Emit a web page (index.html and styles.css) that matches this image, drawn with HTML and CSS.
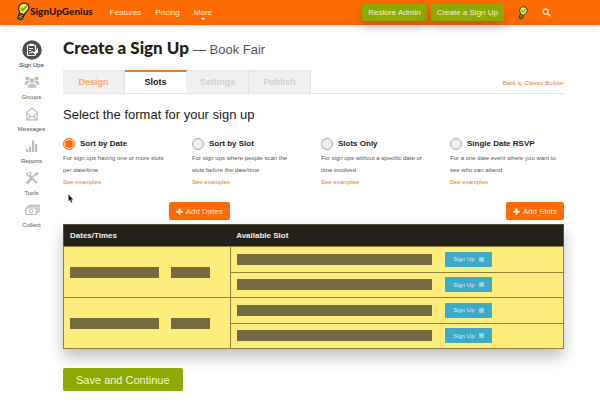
FILE: index.html
```html
<!DOCTYPE html>
<html lang="en">
<head>
<meta charset="utf-8">
<title>Create a Sign Up</title>
<link rel="stylesheet" href="styles.css">
</head>
<body>
<svg class="defs" aria-hidden="true">
  <symbol id="bulb" viewBox="0 0 16 20">
    <path d="M9.500 1c3.500 0 5.700 2.400 5.300 5.500-.3 2.200-1.900 3.300-3.300 4.600-.8.800-1.300 1.700-1.900 2.600L5 12c.2-1.400-.2-2.300-.7-3.500C3 5 5.300 1 9.500 1z" fill="#f1ea55" stroke="#30300c" stroke-width="1.400"/>
    <path d="M6.500 6l1.700 2.800L12.500 4" fill="none" stroke="#78a81c" stroke-width="1.700"/>
    <path d="M4.400 12l5.200 1.900-1 3.200-2.700 1.700-3-1.500z" fill="#c9bd86" stroke="#30300c" stroke-width="1.400"/>
    <path d="M4 14l4.800 1.700M3.500 16l4.200 1.500" stroke="#30300c" stroke-width="1.100"/>
  </symbol>
  <symbol id="plus" viewBox="0 0 8 8"><path d="M4 .5v7M.5 4h7" stroke="currentColor" stroke-width="2"/></symbol>
  <symbol id="grid" viewBox="0 0 6 6"><path d="M1 .5v5M3 .5v5M5 .5v5M.5 1h5M.5 3h5M.5 5h5" stroke="currentColor" stroke-width=".8"/></symbol>
</svg>

<header class="topbar">
  <a class="logo" href="#"><svg class="logo-bulb"><use href="#bulb"/></svg><span>SignUpGenius</span></a>
  <nav class="nav" aria-label="Main">
    <a href="#">Features</a>
    <a href="#">Pricing</a>
    <a href="#" class="more">More</a>
  </nav>
  <div class="actions">
    <button class="btn btn-green" type="button">Restore Admin</button>
    <button class="btn btn-green" type="button">Create a Sign Up</button>
  </div>
  <a class="tip" href="#" aria-label="Ideas"><svg class="tip-bulb"><use href="#bulb"/></svg></a>
  <button class="search" type="button" aria-label="Search">
    <svg viewBox="0 0 9 9"><circle cx="3.600" cy="3.600" r="2.600" fill="none" stroke="#ffe9d6" stroke-width="1.300"/><path d="M5.500 5.500l2.800 2.800" stroke="#ffe9d6" stroke-width="1.600"/></svg>
  </button>
</header>

<div class="page">
  <nav class="side" aria-label="Sections">
    <a href="#" class="current">
      <svg viewBox="0 0 20 20"><circle cx="10" cy="10" r="9.700" fill="#4d4d4f"/><rect x="5.500" y="5" width="8" height="10.500" rx="1" fill="none" stroke="#fff" stroke-width="1.200"/><rect x="7.300" y="3.700" width="4.400" height="2.400" rx=".6" fill="#fff"/><path d="M7 8.500h4M7 10.500h2M7 12.800h3" stroke="#fff"/><path d="M9.500 10.200l1.800 1.700 4.700-4.200v5l-3 1.600-3.500-2.200z" fill="#fff"/><path d="M10.500 10.500l1.500 1.400 2.800-2.700" fill="none" stroke="#4d4d4f" stroke-width=".7"/></svg>
      <span>Sign Ups</span></a>
    <a href="#">
      <svg viewBox="0 0 20 20" fill="#bdbdbd"><circle cx="5.500" cy="6.500" r="2.100"/><circle cx="14.500" cy="6.500" r="2.100"/><path d="M2.700 12.500c0-2.500 1-3.700 2.800-3.700 1 0 1.600.3 2 .9-1 .8-1.700 1.800-1.900 2.800zM17.300 12.500c0-2.500-1-3.700-2.800-3.700-1 0-1.600.3-2 .9 1 .8 1.700 1.800 1.900 2.800z"/><circle cx="10" cy="8.600" r="2.300"/><path d="M5.900 15.700c0-3 1.300-4.300 4.100-4.300s4.100 1.300 4.100 4.300z"/></svg>
      <span>Groups</span></a>
    <a href="#">
      <svg viewBox="0 0 20 20" fill="none" stroke="#bdbdbd" stroke-width="1.200"><path d="M10 4l5.200 4.400v7.400H4.800V8.400z"/><path d="M4.800 15.800l3.700-3.300h3l3.700 3.300M5 9l3.500 3.500M15 9l-3.500 3.500"/></svg>
      <span>Messages</span></a>
    <a href="#">
      <svg viewBox="0 0 20 20" fill="#bdbdbd"><path d="M4 13h2.200v3H4zM7 10.500h2.200V16H7zM10 4.500h2.200V16H10zM13 8h2.200v8H13z"/></svg>
      <span>Reports</span></a>
    <a href="#">
      <svg viewBox="0 0 20 20" fill="none" stroke="#bdbdbd"><path d="M7.500 7.500l7.500 7.500" stroke-width="2.200"/><path d="M5 4.200v2.300l1.500 1.300 2-.6.300-2-1.300-1.500" stroke-width="1.500"/><path d="M15.800 4.200L9.500 10" stroke-width="1.400"/><path d="M9.500 10.500l-4.800 5" stroke-width="2.700"/><path d="M13 6.500l1.500.2 1.800-2" stroke-width="1.300"/></svg>
      <span>Tools</span></a>
    <a href="#">
      <svg viewBox="0 0 20 20" fill="none" stroke="#bdbdbd" stroke-width="1.100"><path d="M4 8h10v6.500H4zM5.500 8V6.400h10.200v6.300H14M7.500 6.400V5h9.700v6.200h-1.500"/><circle cx="9" cy="11.200" r="1.700"/></svg>
      <span>Collect</span></a>
  </nav>

  <main class="content">
    <h1>Create a Sign Up <span>— Book Fair</span></h1>
    <div class="tabs">
      <a class="tab done" href="#">Design</a>
      <a class="tab active" href="#">Slots</a>
      <a class="tab" href="#">Settings</a>
      <a class="tab" href="#">Publish</a>
      <a class="classic" href="#">Back to Classic Builder</a>
    </div>

    <h2>Select the format for your sign up</h2>
    <div class="formats">
      <div class="format">
        <label><input type="radio" name="format" checked>Sort by Date</label>
        <p>For sign ups having one or more slots per date/time</p>
        <a href="#">See examples</a>
      </div>
      <div class="format">
        <label><input type="radio" name="format">Sort by Slot</label>
        <p>For sign ups where people scan the slots before the date/time</p>
        <a href="#">See examples</a>
      </div>
      <div class="format">
        <label><input type="radio" name="format">Slots Only</label>
        <p>For sign ups without a specific date or time involved</p>
        <a href="#">See examples</a>
      </div>
      <div class="format">
        <label><input type="radio" name="format">Single Date RSVP</label>
        <p>For a one date event where you want to see who can attend</p>
        <a href="#">See examples</a>
      </div>
    </div>

    <div class="adders">
      <div class="add-dates"><button class="btn btn-orange" type="button"><svg><use href="#plus"/></svg>Add Dates</button></div>
      <button class="btn btn-orange" type="button"><svg><use href="#plus"/></svg>Add Slots</button>
    </div>

    <table class="slots">
      <thead><tr><th class="col-date">Dates/Times</th><th>Available Slot</th></tr></thead>
      <tbody>
        <tr>
          <td rowspan="2"><div class="line"><i class="bar bar-date"></i><i class="bar bar-time"></i></div></td>
          <td><div class="line"><i class="bar bar-slot"></i><button class="signup" type="button">Sign Up<svg><use href="#grid"/></svg></button></div></td>
        </tr>
        <tr><td><div class="line"><i class="bar bar-slot"></i><button class="signup" type="button">Sign Up<svg><use href="#grid"/></svg></button></div></td></tr>
        <tr>
          <td rowspan="2"><div class="line"><i class="bar bar-date"></i><i class="bar bar-time"></i></div></td>
          <td><div class="line"><i class="bar bar-slot"></i><button class="signup" type="button">Sign Up<svg><use href="#grid"/></svg></button></div></td>
        </tr>
        <tr><td><div class="line"><i class="bar bar-slot"></i><button class="signup" type="button">Sign Up<svg><use href="#grid"/></svg></button></div></td></tr>
      </tbody>
    </table>

    <button class="btn save" type="button">Save and Continue</button>
    <svg class="cursor" viewBox="0 0 6 9" aria-hidden="true"><path d="M.5.500v6.600L2 5.800l1.100 2.700 1.200-.5-1.100-2.600h2z" fill="#111" stroke="#999" stroke-width=".4"/></svg>
  </main>
</div>
</body>
</html>
```
FILE: styles.css
```css
* { box-sizing: border-box; }

body {
  margin: 0;
  background: #fff;
  color: #222;
  font-family: "Liberation Sans", Arial, sans-serif;
  font-size: 8px;
}

a { color: inherit; text-decoration: none; }
button { border: 0; padding: 0; font: inherit; cursor: pointer; }
.defs { position: absolute; width: 0; height: 0; }

.topbar {
  display: flex;
  align-items: center;
  height: 25px;
  padding: 0 49px 0 15px;
  background: #fd6b02;
  color: #ffe9d6;
  box-shadow: 0 1px 5px rgba(0, 0, 0, .18);
}
.logo {
  display: flex;
  align-items: center;
  padding-bottom: 3px;
  color: #2b1a08;
  font: 900 10px/12px Lato, sans-serif;
}
.logo-bulb { width: 15px; height: 19px; }
.nav { display: flex; gap: 14px; margin-left: 17px; }
.more { position: relative; }
.more::after {
  content: "";
  position: absolute;
  top: 10px;
  left: 7px;
  border: 2px solid transparent;
  border-top-color: #fff;
}
.actions { display: flex; gap: 4px; margin-left: auto; }

.btn { border-radius: 2px; color: #fff; }
.btn-green {
  height: 17px;
  padding: 0 6px;
  background: #8caa00;
  color: #f2f6da;
  box-shadow: 0 6px 12px rgba(0, 0, 0, .2);
}
.tip { margin-left: 13px; }
.tip-bulb { display: block; width: 11px; height: 14px; }
.search { display: flex; margin-left: 14px; background: none; }
.search svg { width: 9px; height: 9px; }

.page { display: flex; }
.side {
  display: flex;
  flex-direction: column;
  flex: 0 0 63px;
  gap: 3px;
  padding-top: 15px;
}
.side a {
  display: flex;
  flex-direction: column;
  align-items: center;
  gap: 1px;
  color: #555;
  font-size: 6px;
  line-height: 8px;
}
.side .current { color: #222; }
.side svg { width: 20px; height: 20px; }

.content { position: relative; flex: 1; padding: 11px 36px 14px 0; }

h1 {
  margin: 0;
  color: #222218;
  font: 900 17px/24px Lato, sans-serif;
}
h1 span {
  color: #555;
  font: 13px "Liberation Sans", Arial, sans-serif;
}

.tabs {
  display: flex;
  margin-top: 10px;
  border-bottom: 1px solid #e6e6e6;
}
.tab {
  width: 62px;
  height: 23px;
  border-right: 1px solid #e2e2e2;
  border-top: 1px solid #e6e6e6;
  background: #f0f0f0;
  color: #d0d0d0;
  font-size: 9px;
  font-weight: bold;
  line-height: 22px;
  text-align: center;
}
.tab.done { color: #fdaa62; }
.tab.active {
  margin-bottom: -1px;
  border-top: 2px solid #ee7a1f;
  border-right-color: #f0f0f0;
  background: #fff;
  color: #222;
  line-height: 20px;
}
.classic {
  margin: 9px 0 0 auto;
  color: #ee7a1f;
  font-size: 6px;
  line-height: 8px;
}

h2 {
  margin: 13px 0 0;
  font-size: 13px;
  font-weight: normal;
  line-height: 16px;
}

.formats {
  display: grid;
  grid-template-columns: repeat(4, 1fr);
  gap: 15px;
  margin-top: 14px;
}
.format { color: #555; font-size: 6px; line-height: 12px; }
.format label {
  display: flex;
  align-items: center;
  gap: 5px;
  height: 14px;
  color: #222;
  font-size: 8px;
  font-weight: bold;
}
.format input {
  appearance: none;
  width: 12px;
  height: 12px;
  margin: 0;
  border: 1px solid #aaa;
  border-radius: 50%;
  background: #eee;
}
.format input:checked {
  border-color: #fd6b02;
  background: #fd6b02;
  box-shadow: inset 0 0 0 1px #fff;
}
.format p { margin: 1px 0 0; padding-right: 5px; }
.format a { display: block; color: #f07818; }

.adders {
  display: flex;
  justify-content: space-between;
  margin-top: 14px;
}
.add-dates { width: 33.333%; text-align: right; }
.btn-orange {
  display: inline-flex;
  align-items: center;
  gap: 3px;
  height: 18px;
  padding: 0 7px;
  background: #fd6b02;
  color: #ffe9d6;
}
.btn-orange svg { width: 7px; height: 7px; color: #fff; }

.slots {
  width: 100%;
  height: 125px;
  margin-top: 4px;
  border: 1px solid #555038;
  border-collapse: collapse;
  table-layout: fixed;
  background: #feec7c;
  box-shadow: 0 8px 14px rgba(0, 0, 0, .25);
}
.slots th {
  height: 22px;
  padding: 0 6px;
  background: #232119;
  color: #eee;
  text-align: left;
}
.col-date { width: 33.333%; }
.slots td {
  height: 25px;
  padding: 0 6px;
  border: 1px solid #95803c;
}
.line { display: flex; align-items: center; }
.bar { height: 11px; background: #756b42; }
.bar-date { width: 58%; }
.bar-time { width: 25%; margin-left: 8%; }
.bar-slot { width: 61%; }
.signup {
  display: flex;
  align-items: center;
  justify-content: center;
  gap: 4px;
  width: 47px;
  height: 15px;
  margin-left: 4%;
  border-radius: 1px;
  background: #3eaac8;
  color: #d5eef5;
  font-size: 6px;
}
.signup svg { width: 5px; height: 5px; }

.save {
  display: block;
  height: 23px;
  margin-top: 19px;
  padding: 0 13px;
  background: #8caa00;
  color: #f2f6da;
  font-size: 11px;
}

.cursor {
  position: absolute;
  top: 169px;
  left: 5px;
  width: 6px;
  height: 9px;
}
```
